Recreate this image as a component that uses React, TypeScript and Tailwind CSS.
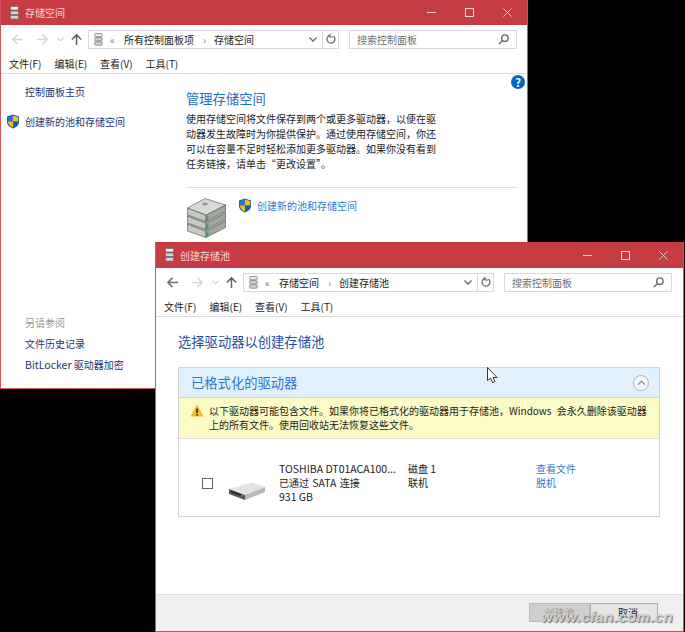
import type { ReactNode } from "react";

function StackIcon({ className }: { className: string }) {
  return (
    <svg viewBox="0 0 9 14" className={className}>
      <rect x=".5" y=".5" width="8" height="3.600" rx="1" fill="#ececec" stroke="#6f6f6f" strokeWidth="0.8" />
      <rect x=".5" y="5" width="8" height="3.600" rx="1" fill="#d4d4d4" stroke="#6f6f6f" strokeWidth="0.8" />
      <rect x=".5" y="9.500" width="8" height="3.600" rx="1" fill="#d4d4d4" stroke="#6f6f6f" strokeWidth="0.8" />
    </svg>
  );
}

function ShieldIcon() {
  return (
    <svg viewBox="0 0 14 15" className="h-[15px] w-[14px] shrink-0">
      <path d="M7 .5 13 2.500V8c0 3-2.600 5.200-6 6.500C3.600 13.200 1 11 1 8V2.500Z" fill="#1c5fa8" />
      <path d="M7 1.500V7.500H1.800V3.200Z" fill="#2b73c4" />
      <path d="M7 1.500 12.200 3.200V7.500H7Z" fill="#f2bd1d" />
      <path d="M7 7.500V13.500C4.500 12.400 2 10.600 1.800 7.500Z" fill="#f2bd1d" />
      <path d="M7 7.500H12.200C12 10.600 9.500 12.400 7 13.500Z" fill="#1c5fa8" />
    </svg>
  );
}

function DriveStack() {
  return (
    <svg viewBox="0 0 39 40" className="h-[40px] w-[39px] shrink-0">
      {[16, 8, 0].map((y) => (
        <g key={y} stroke="#5f625f" strokeWidth="0.7" strokeLinejoin="round">
          <path d={`M.5 ${y + 10}L19 ${y + 17}V${y + 23.500}L.5 ${y + 17}Z`} fill="#c6c8c6" />
          <path d={`M19 ${y + 17}L38.500 ${y + 7}V${y + 13.500}L19 ${y + 23.500}Z`} fill="#a3a5a3" />
          <path d={`M.5 ${y + 10}L18 ${y + .5}L38.500 ${y + 7}L19 ${y + 17}Z`} fill="#d8dad8" />
          <path d={`M19.500 ${y + 18.500}H21.500V${y + 22.500}H19.500Z`} fill="#22b544" stroke="none" />
        </g>
      ))}
      <ellipse cx="18" cy="6" rx="3" ry="1.400" fill="#9a9c9a" />
    </svg>
  );
}

function DiskIcon() {
  return (
    <svg viewBox="0 0 37 18" className="h-[18px] w-[37px] shrink-0">
      <path d="M1 7 24 .5 37 5 17 13Z" fill="#e4e4e4" />
      <path d="M17 13 37 5V10L17 18Z" fill="#b9b9b9" />
      <path d="M1 7 17 13V18L1 12Z" fill="#555" />
      <path d="M3 8.500 15 13V15L3 10.500Z" fill="#2b2b2b" />
      <rect x="13" y="13" width="2" height="1.600" fill="#35c653" />
    </svg>
  );
}

function TitleBar({ title, barClass }: { title: string; barClass: string }) {
  return (
    <div className={`flex shrink-0 items-center bg-[#c63c43] pl-[9px] ${barClass}`}>
      <StackIcon className="h-[14px] w-[9px]" />
      <span className="ml-[6px] text-[10px] text-[#f6d6d6]">{title}</span>
      <div className="ml-auto flex items-center">
        <div className="flex w-[38px] justify-center">
          <div className="h-px w-[9px] bg-[#f5d8d8]" />
        </div>
        <div className="flex w-[38px] justify-center">
          <div className="h-[9px] w-[9px] border border-[#f5d8d8]" />
        </div>
        <div className="mr-px flex w-[38px] justify-center">
          <svg viewBox="0 0 10 10" className="h-[9px] w-[9px]" stroke="#f5d8d8" strokeWidth="1">
            <path d="M.5.5 9.500 9.500M9.500.5.500 9.500" />
          </svg>
        </div>
      </div>
    </div>
  );
}

function Arrow({ dir, color }: { dir: "left" | "right" | "up"; color: string }) {
  const d = dir === "left" ? "M13 7H2M7 2 2 7l5 5" : dir === "right" ? "M1 7H12M7 2l5 5-5 5" : "M7 13V2M2 7l5-5 5 5";
  return (
    <svg viewBox="0 0 14 14" className="h-[13px] w-[13px]" fill="none" stroke={color} strokeWidth="1.600">
      <path d={d} />
    </svg>
  );
}

function NavRow({ crumbs, backColor }: { crumbs: [string, string]; backColor: string }) {
  return (
    <div className="flex h-[28px] shrink-0 items-center bg-white pl-[10px]">
      <Arrow dir="left" color={backColor} />
      <div className="ml-[12px]">
        <Arrow dir="right" color="#d6d6d6" />
      </div>
      <svg viewBox="0 0 8 5" className="ml-[8px] h-[5px] w-[7px]" fill="none" stroke="#c4c4c4" strokeWidth="1.200">
        <path d="M.5.500 4 4 7.500.5" />
      </svg>
      <div className="ml-[6px]">
        <Arrow dir="up" color="#606060" />
      </div>
      <div className="ml-[5px] flex h-[19px] w-[251px] items-center border border-[#d9d9d9] pl-[5px] text-[10px] text-[#222]">
        <StackIcon className="h-[13px] w-[9px] shrink-0" />
        <span className="ml-[7px] w-[6px] text-[#777]">«</span>
        <span className="ml-[8px]">{crumbs[0]}</span>
        <span className="ml-[9px] w-[4px] text-[#777]">›</span>
        <span className="ml-[7px]">{crumbs[1]}</span>
        <svg viewBox="0 0 8 5" className="ml-auto mr-[5px] h-[5px] w-[8px]" fill="none" stroke="#666" strokeWidth="1.300">
          <path d="M.5.500 4 4 7.500.5" />
        </svg>
        <div className="flex h-full w-[16px] items-center justify-center border-l border-[#d9d9d9]">
          <svg viewBox="0 0 10 10" className="h-[10px] w-[10px]" fill="none" stroke="#666" strokeWidth="1.200">
            <path d="M7.500 2A4 4 0 1 1 4 1.200M4 0V3H7" />
          </svg>
        </div>
      </div>
      <div className="ml-[10px] flex h-[19px] w-[168px] items-center justify-between border border-[#d9d9d9] px-[7px] text-[10px] text-[#707070]">
        <span>搜索控制面板</span>
        <svg viewBox="0 0 12 12" className="h-[11px] w-[11px]" fill="none" stroke="#666" strokeWidth="1.500">
          <circle cx="7.500" cy="4.500" r="3.500" />
          <path d="M5 7 1 11" />
        </svg>
      </div>
    </div>
  );
}

function MenuRow() {
  return (
    <div className="flex h-[21px] shrink-0 items-center border-b border-[#dedede] bg-white pl-[8px] text-[10px] text-[#1a1a1a]">
      <span className="w-[45.500px]">文件(F)</span>
      <span className="w-[45.500px]">编辑(E)</span>
      <span className="w-[45.500px]">查看(V)</span>
      <span className="w-[45.500px]">工具(T)</span>
    </div>
  );
}

function Link({ children }: { children: ReactNode }) {
  return <span className="text-[#2b7bd0]">{children}</span>;
}

function StorageWindow() {
  return (
    <div className="absolute left-0 top-0 flex h-[389px] w-[528px] flex-col border-x border-b border-[#d0555b] bg-white">
      <TitleBar title="存储空间" barClass="h-[25px]" />
      <NavRow crumbs={["所有控制面板项", "存储空间"]} backColor="#d6d6d6" />
      <MenuRow />
      <div className="flex min-h-0 flex-1">
        <div className="flex w-[185px] shrink-0 flex-col pl-[5px] pt-[10px] text-[10px] leading-[15px] text-[#24356e]">
          <span className="pl-[19px]">控制面板主页</span>
          <div className="mt-[15px] flex items-center gap-[5px]">
            <ShieldIcon />
            <span>创建新的池和存储空间</span>
          </div>
          <span className="mt-auto pl-[19px] text-[#999]">另请参阅</span>
          <span className="mt-[6px] pl-[19px]">文件历史记录</span>
          <span className="mb-[16px] mt-[6px] pl-[19px]">
            <span className="text-[10.500px]">BitLocker</span> 驱动器加密
          </span>
        </div>
        <div className="relative flex-1 pt-[15px]">
          <h1 className="text-[13.300px] leading-[20px] text-[#1f6fbf]">管理存储空间</h1>
          <p className="mt-[2px] whitespace-nowrap text-[10px] leading-[15px] text-[#222]">
            使用存储空间将文件保存到两个或更多驱动器，以便在驱
            <br />
            动器发生故障时为你提供保护。通过使用存储空间，你还
            <br />
            可以在容量不足时轻松添加更多驱动器。如果你没有看到
            <br />
            任务链接，请单击“更改设置”。
          </p>
          <div className="ml-px mt-[16px] h-px w-[330px] bg-[#dedede]" />
          <div className="ml-px mt-[10px] flex items-start">
            <DriveStack />
            <div className="ml-[12px] flex items-center gap-[5px] text-[10px]">
              <ShieldIcon />
              <Link>创建新的池和存储空间</Link>
            </div>
          </div>
          <div className="absolute right-[2px] top-px flex h-[14px] w-[14px] items-center justify-center rounded-full bg-[#0a66bd] text-[11px] font-bold leading-none text-white">
            ?
          </div>
        </div>
      </div>
    </div>
  );
}

function PoolWindow() {
  return (
    <div className="absolute left-[155px] top-[242px] flex h-[390px] w-[529px] flex-col border-x border-b border-[#d0555b] bg-white">
      <TitleBar title="创建存储池" barClass="h-[26px]" />
      <NavRow crumbs={["存储空间", "创建存储池"]} backColor="#707070" />
      <MenuRow />
      <div className="flex min-h-0 flex-1 flex-col">
        <div className="flex-1 pl-[22px] pr-[23px] pt-[16px]">
          <h1 className="text-[13.300px] leading-[18px] text-[#1b4fa0]">选择驱动器以创建存储池</h1>
          <div className="mt-[16px] border border-[#d3d3d3]">
            <div className="flex h-[30px] items-center justify-between border-b border-[#d3d3d3] bg-[#e1f0fd] pl-[12px] pr-[10px]">
              <span className="text-[13.300px] text-[#2a78cc]">已格式化的驱动器</span>
              <div className="flex h-[16px] w-[16px] items-center justify-center rounded-full border border-[#b5b5b5] bg-[#f4f9fd]">
                <svg viewBox="0 0 10 6" className="h-[6px] w-[9px]" fill="none" stroke="#8a8a8a" strokeWidth="1.300">
                  <path d="M1 5 5 1l4 4" />
                </svg>
              </div>
            </div>
            <div className="flex h-[41px] items-start gap-[5px] border-b border-[#dedede] bg-[#fdfbc5] pl-[11px] pt-[6px] text-[10px] leading-[14px] text-[#222]">
              <svg viewBox="0 0 14 13" className="h-[13px] w-[14px] shrink-0">
                <path d="M7 .5 13.500 12.500H.5Z" fill="#f5b81e" />
                <rect x="6.300" y="4.500" width="1.500" height="4.500" fill="#222" />
                <rect x="6.300" y="10" width="1.500" height="1.500" fill="#222" />
              </svg>
              <p className="whitespace-nowrap">
                以下驱动器可能包含文件。如果你将已格式化的驱动器用于存储池，<span className="mr-[3px]">Windows</span> 会永久删除该驱动器
                <br />
                上的所有文件。使用回收站无法恢复这些文件。
              </p>
            </div>
            <div className="flex h-[77px] items-start pt-[23px] text-[10px] leading-[14px] text-[#222]">
              <div className="ml-[23px] mt-[16px] h-[11px] w-[11px] shrink-0 border border-[#666]" />
              <div className="ml-[15px] mt-[20px]">
                <DiskIcon />
              </div>
              <div className="ml-[14px] flex w-[129px] flex-col">
                <span className="text-[10.500px]">TOSHIBA DT01ACA100...</span>
                <span className="[word-spacing:1px]">
                  已通过 <span className="text-[10.500px]">SATA</span> 连接
                </span>
                <span className="text-[10.500px]">931 GB</span>
              </div>
              <div className="flex w-[128px] flex-col">
                <span>
                  磁盘 <span className="text-[10.500px]">1</span>
                </span>
                <span>联机</span>
              </div>
              <div className="flex flex-col">
                <Link>查看文件</Link>
                <Link>脱机</Link>
              </div>
            </div>
          </div>
        </div>
        <div className="flex h-[37px] shrink-0 items-start justify-end border-t border-[#dedede] bg-[#f0f0f0] pr-[25px] pt-[8px] text-[10px]">
          <div className="flex h-[19px] w-[61px] items-center justify-center border border-[#bdbdbd] bg-[#cfcfcf] text-[#a0a0a0]">
            创建池
          </div>
          <div className="flex h-[19px] w-[68px] items-center justify-center border border-[#adadad] bg-[#e6e6e6] pl-[8px] text-[#1a1a1a]">
            取消
          </div>
        </div>
      </div>
    </div>
  );
}

export default function App() {
  return (
    <div className="relative h-[632px] w-[685px] overflow-hidden bg-black font-['Noto_Sans_CJK_SC','Noto_Sans',sans-serif]">
      <StorageWindow />
      <PoolWindow />
      {/* mouse pointer */}
      <svg viewBox="0 0 11 17" className="absolute left-[487px] top-[367px] h-[17px] w-[11px]">
        <path d="M.5.5V13.500L3.500 11 5.500 15.500 8 14.500 6 10.500H10Z" fill="#fff" stroke="#222" strokeWidth="0.900" />
      </svg>
      {/* watermark */}
      <div className="absolute left-[541px] top-[608px] whitespace-nowrap font-['Liberation_Sans',sans-serif] text-[15px] font-bold italic leading-[18px] tracking-[0.4px] text-[#cfcfcf] [text-shadow:1px_1px_1px_#777]">
        www.cfan.com.cn
      </div>
    </div>
  );
}
